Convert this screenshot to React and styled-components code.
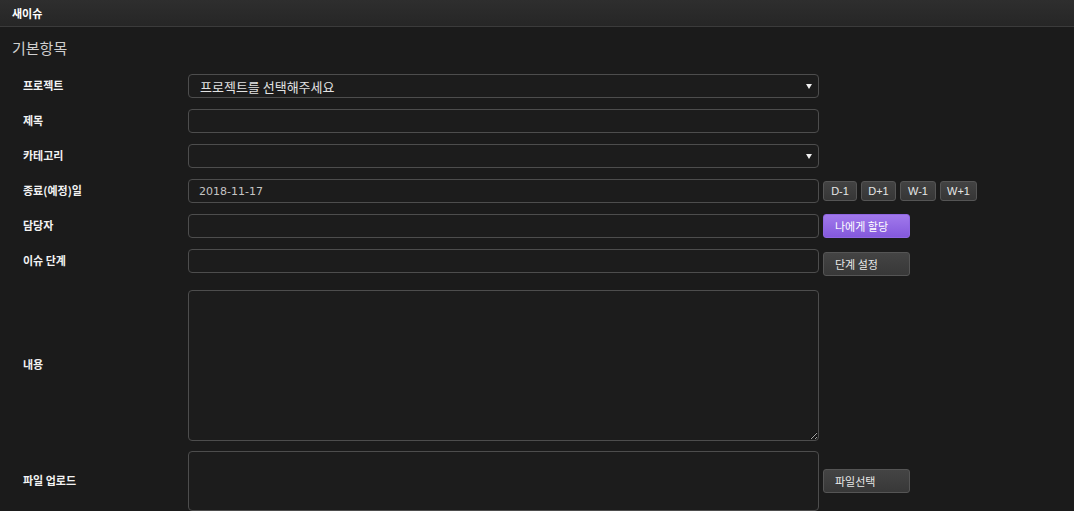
import React from "react";
import styled, { createGlobalStyle } from "styled-components";

const GlobalStyle = createGlobalStyle`
  html, body {
    margin: 0;
    padding: 0;
    background: #1b1b1b;
  }
  body {
    font-family: "Noto Sans CJK KR", "Noto Sans", "Liberation Sans", sans-serif;
    color: #eeeeee;
  }
`;

const Header = styled.div`
  height: 26px;
  padding: 0 12px;
  display: flex;
  align-items: center;
  background: linear-gradient(180deg, #2e2e2e 0%, #262626 100%);
  border-bottom: 1px solid #3b3b3b;
  font-size: 11px;
  font-weight: 700;
  color: #ffffff;
`;

const Section = styled.section`
  padding: 0 12px;
`;

const SectionTitle = styled.h2`
  margin: 11px 0 16px;
  font-size: 15px;
  line-height: 20px;
  font-weight: 400;
  color: #cfcfcf;
`;

const Row = styled.div`
  display: grid;
  grid-template-columns: 172px 631px auto;
  column-gap: 4px;
  align-items: center;
  margin-bottom: ${(p) => p.$gap || 11}px;
`;

const Label = styled.label`
  padding-left: 11px;
  margin-top: -3px;
  font-size: 11px;
  font-weight: 700;
  color: #f2f2f2;
`;

const Field = styled.div`
  position: relative;
  box-sizing: border-box;
  height: ${(p) => p.$height || 24}px;
  border: 1px solid #4d4d4d;
  border-radius: 4px;
  background: #1c1c1c;
  display: flex;
  align-items: center;
  padding: 0 11px;
  font-size: 13px;
  color: #e2e2e2;
`;

const Arrow = styled.span`
  position: absolute;
  right: 6px;
  top: 9px;
  width: 0;
  height: 0;
  border-left: 3px solid transparent;
  border-right: 3px solid transparent;
  border-top: 5px solid #f0f0f0;
`;

const DateText = styled.span`
  margin-left: -1px;
  font-family: "DejaVu Sans", "Liberation Sans", sans-serif;
  font-size: 11px;
  color: #c4c4c4;
`;

const TextArea = styled.textarea`
  box-sizing: border-box;
  width: 631px;
  height: 151px;
  margin: 0;
  display: block;
  border: 1px solid #4d4d4d;
  border-radius: 4px;
  background: #1c1c1c;
  color: #e2e2e2;
  outline: none;
  resize: both;
`;

const Buttons = styled.div`
  display: flex;
  gap: 4px;
  margin-top: ${(p) => p.$shift || 0}px;
  margin-bottom: ${(p) => -(p.$shift || 0)}px;
`;

const SmallButton = styled.button`
  box-sizing: border-box;
  height: 20px;
  min-width: ${(p) => p.$w || 34}px;
  padding: 0 6px;
  border: 1px solid #555555;
  border-radius: 3px;
  background: linear-gradient(180deg, #434343 0%, #363636 100%);
  font-family: "Liberation Sans", Arial, sans-serif;
  font-size: 11px;
  color: #e6e6e6;
`;

const Button = styled.button`
  box-sizing: border-box;
  width: 87px;
  height: 24px;
  padding: 0 0 0 11px;
  text-align: left;
  border: 1px solid ${(p) => (p.$primary ? "#8f66e2" : "#555555")};
  border-radius: 3px;
  background: ${(p) =>
    p.$primary
      ? "linear-gradient(180deg, #a179ec 0%, #8459dc 100%)"
      : "linear-gradient(180deg, #444444 0%, #383838 100%)"};
  font-family: "Noto Sans CJK KR", sans-serif;
  font-size: 11px;
  color: ${(p) => (p.$primary ? "#ffffff" : "#e8e8e8")};
`;

export default function App() {
  return (
    <>
      <GlobalStyle />
      <Header>새이슈</Header>
      <Section>
        <SectionTitle>기본항목</SectionTitle>

        <Row>
          <Label>프로젝트</Label>
          <Field>
            프로젝트를 선택해주세요
            <Arrow />
          </Field>
        </Row>

        <Row>
          <Label>제목</Label>
          <Field />
        </Row>

        <Row>
          <Label>카테고리</Label>
          <Field>
            <Arrow />
          </Field>
        </Row>

        <Row>
          <Label>종료(예정)일</Label>
          <Field>
            <DateText>2018-11-17</DateText>
          </Field>
          <Buttons>
            <SmallButton>D-1</SmallButton>
            <SmallButton $w={35}>D+1</SmallButton>
            <SmallButton $w={36}>W-1</SmallButton>
            <SmallButton $w={36}>W+1</SmallButton>
          </Buttons>
        </Row>

        <Row>
          <Label>담당자</Label>
          <Field />
          <Buttons>
            <Button $primary>나에게 할당</Button>
          </Buttons>
        </Row>

        <Row $gap={17}>
          <Label>이슈 단계</Label>
          <Field />
          <Buttons $shift={3}>
            <Button>단계 설정</Button>
          </Buttons>
        </Row>

        <Row $gap={10}>
          <Label>내용</Label>
          <TextArea />
        </Row>

        <Row>
          <Label>파일 업로드</Label>
          <Field $height={60} />
          <Buttons>
            <Button>파일선택</Button>
          </Buttons>
        </Row>
      </Section>
    </>
  );
}
